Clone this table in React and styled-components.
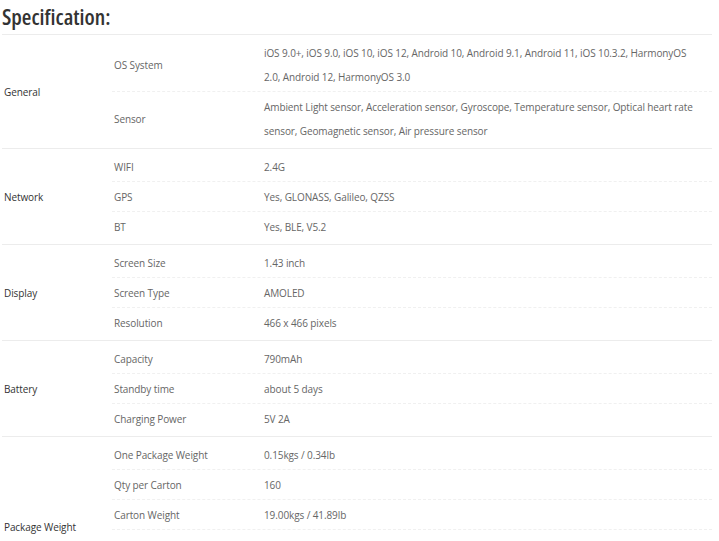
import React from "react";
import styled, { createGlobalStyle } from "styled-components";

const specs = [
	{
		group: "General",
		rows: [
			["OS System", "iOS 9.0+, iOS 9.0, iOS 10, iOS 12, Android 10, Android 9.1, Android 11, iOS 10.3.2, HarmonyOS 2.0, Android 12, HarmonyOS 3.0"],
			["Sensor", "Ambient Light sensor, Acceleration sensor, Gyroscope, Temperature sensor, Optical heart rate sensor, Geomagnetic sensor, Air pressure sensor"],
		],
	},
	{
		group: "Network",
		rows: [
			["WIFI", "2.4G"],
			["GPS", "Yes, GLONASS, Galileo, QZSS"],
			["BT", "Yes, BLE, V5.2"],
		],
	},
	{
		group: "Display",
		rows: [
			["Screen Size", "1.43 inch"],
			["Screen Type", "AMOLED"],
			["Resolution", "466 x 466 pixels"],
		],
	},
	{
		group: "Battery",
		rows: [
			["Capacity", "790mAh"],
			["Standby time", "about 5 days"],
			["Charging Power", "5V 2A"],
		],
	},
	{
		group: "Package Weight",
		rows: [
			["One Package Weight", "0.15kgs / 0.34lb"],
			["Qty per Carton", "160"],
			["Carton Weight", "19.00kgs / 41.89lb"],
			["Carton Size", "52cm x 40cm x 30cm"],
			["Package Contents", "1 x Smart Watch, 1 x Charging Cable, 1 x English User Manual, 1 x Gift Box, 1 x Extra Strap, 1 x Screen Protector, 1 x Warranty Card, 1 x Spare Strap Pins, 1 x Cleaning Cloth"],
		],
	},
];

function App() {
	return (
		<>
			<GlobalStyle />
			<Page>
				<Heading>Specification:</Heading>
				<Table>
					{specs.map((spec) => (
						<Group key={spec.group}>
							<GroupLabel>{spec.group}</GroupLabel>
							<Rows>
								{spec.rows.map(([key, value]) => (
									<Row key={key}>
										<Key>{key}</Key>
										<Value>{value}</Value>
									</Row>
								))}
							</Rows>
						</Group>
					))}
				</Table>
			</Page>
		</>
	);
}

const GlobalStyle = createGlobalStyle`
	body {
		margin: 0;
		background: #fff;
		font-family: "Open Sans", "DejaVu Sans", sans-serif;
	}
`;

const Page = styled.div`
	width: 719px;
	padding-left: 2px;
	box-sizing: border-box;
`;

const Heading = styled.div`
	font-size: 22px;
	font-weight: 600;
	font-stretch: 75%;
	color: #333;
	line-height: 32px;
	height: 34px;
	border-bottom: 1px solid #ececec;
	width: 710px;
`;

const Table = styled.div`
	width: 710px;
`;

const Group = styled.div`
	display: grid;
	grid-template-columns: 110px 1fr;
	align-items: center;
	padding: 3px 0;
	border-bottom: 1px solid #ececec;
`;

const GroupLabel = styled.div`
	padding-left: 2px;
	font-size: 10px;
	letter-spacing: -0.1px;
	color: #333;
`;

const Rows = styled.div`
	display: flex;
	flex-direction: column;
`;

const Row = styled.div`
	display: grid;
	grid-template-columns: 150px 1fr;
	align-items: center;
	padding: 2.5px 0;
	border-bottom: 1px dashed #f0f0f0;

	&:last-child {
		border-bottom: none;
	}
`;

const Key = styled.div`
	padding-left: 2px;
	font-size: 10px;
	letter-spacing: -0.1px;
	line-height: 24px;
	color: #666;
`;

const Value = styled.div`
	padding: 0 12px 0 2px;
	font-size: 10px;
	letter-spacing: -0.1px;
	line-height: 24px;
	color: #666;
`;

export default App;
